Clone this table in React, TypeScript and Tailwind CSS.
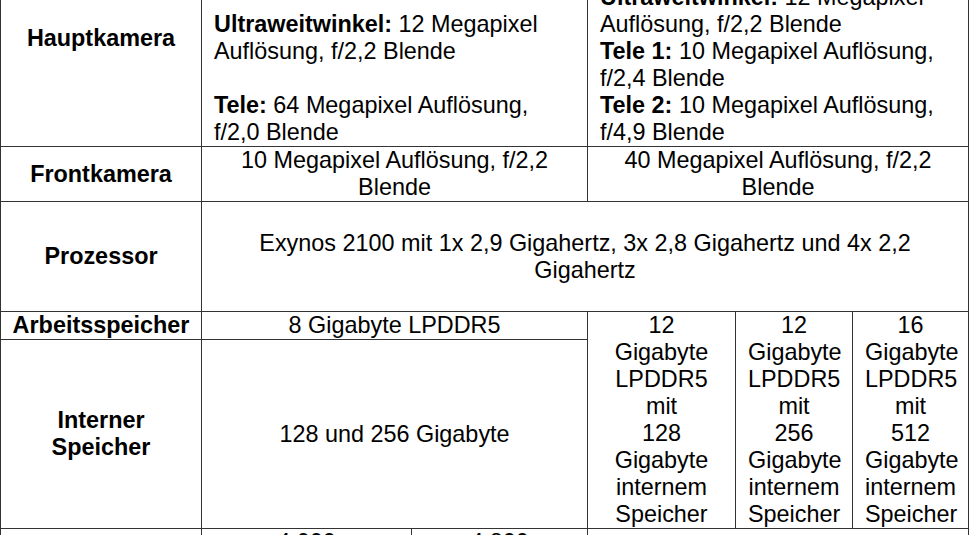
import { Fragment, ReactNode } from "react"

const cell = "border border-[#333] px-3 py-0 align-middle whitespace-nowrap"
const label = "border border-[#333] px-1.5 py-0 text-center font-bold align-middle"

const Lines = ({ lines }: { lines: ReactNode[] }) => (
  <>
    {lines.map((line, index) => (
      <Fragment key={index}>
        {index > 0 && <br />}
        {line}
      </Fragment>
    ))}
  </>
)

const Spec = ({ name, value }: { name: string, value: string }) => (
  <>
    <b>{name}</b> {value}
  </>
)

const ultraMemory = [
  { ram: "12", storage: "128" },
  { ram: "12", storage: "256" },
  { ram: "16", storage: "512" },
]

const App = () => {
  return (
    <div
      className="w-[969px] h-[535px] overflow-hidden bg-white text-black text-[23.4px] leading-[27px]"
      style={{ fontFamily: '"Liberation Sans", Arial, sans-serif' }}
    >
      <table className="-mt-[71px] w-[968px] table-fixed border-collapse">
        <colgroup>
          <col className="w-[201px]" />
          <col className="w-[210px]" />
          <col className="w-[176px]" />
          <col className="w-[148px]" />
          <col className="w-[117px]" />
          <col className="w-[116px]" />
        </colgroup>
        <tbody>
          <tr>
            <td className={label}>Hauptkamera</td>
            <td colSpan={2} className={cell}>
              <Lines lines={[
                <Spec name="Weitwinkel:" value="12 Megapixel" />,
                "Auflösung, f/1,8 Blende",
                "",
                <Spec name="Ultraweitwinkel:" value="12 Megapixel" />,
                "Auflösung, f/2,2 Blende",
                "",
                <Spec name="Tele:" value="64 Megapixel Auflösung," />,
                "f/2,0 Blende",
              ]} />
            </td>
            <td colSpan={3} className={cell}>
              <Lines lines={[
                <Spec name="Weitwinkel:" value="108 Megapixel" />,
                "Auflösung, f/1,8 Blende",
                <Spec name="Ultraweitwinkel:" value="12 Megapixel" />,
                "Auflösung, f/2,2 Blende",
                <Spec name="Tele 1:" value="10 Megapixel Auflösung," />,
                "f/2,4 Blende",
                <Spec name="Tele 2:" value="10 Megapixel Auflösung," />,
                "f/4,9 Blende",
              ]} />
            </td>
          </tr>
          <tr>
            <td className={label}>Frontkamera</td>
            <td colSpan={2} className={cell + " text-center"}>
              <Lines lines={["10 Megapixel Auflösung, f/2,2", "Blende"]} />
            </td>
            <td colSpan={3} className={cell + " text-center"}>
              <Lines lines={["40 Megapixel Auflösung, f/2,2", "Blende"]} />
            </td>
          </tr>
          <tr className="h-[110px]">
            <td className={label}>Prozessor</td>
            <td colSpan={5} className={cell + " text-center"}>
              <Lines lines={[
                "Exynos 2100 mit 1x 2,9 Gigahertz, 3x 2,8 Gigahertz und 4x 2,2",
                "Gigahertz",
              ]} />
            </td>
          </tr>
          <tr className="h-[28px]">
            <td className={label}>Arbeitsspeicher</td>
            <td colSpan={2} className={cell + " text-center"}>8 Gigabyte LPDDR5</td>
            {ultraMemory.map((item, index) => (
              <td key={index} rowSpan={2} className={cell + " px-1 text-center"}>
                <Lines lines={[
                  item.ram,
                  "Gigabyte",
                  "LPDDR5",
                  "mit",
                  item.storage,
                  "Gigabyte",
                  "internem",
                  "Speicher",
                ]} />
              </td>
            ))}
          </tr>
          <tr className="h-[188px]">
            <td className={label}>
              <Lines lines={["Interner", "Speicher"]} />
            </td>
            <td colSpan={2} className={cell + " text-center"}>128 und 256 Gigabyte</td>
          </tr>
          <tr>
            <td className={label}>Akku</td>
            <td className={cell + " text-center"}>
              <Lines lines={["4.000", "mAh"]} />
            </td>
            <td className={cell + " text-center"}>
              <Lines lines={["4.800", "mAh"]} />
            </td>
            <td colSpan={3} className={cell + " text-center"}>5.000 mAh</td>
          </tr>
        </tbody>
      </table>
    </div>
  )
}

export default App
